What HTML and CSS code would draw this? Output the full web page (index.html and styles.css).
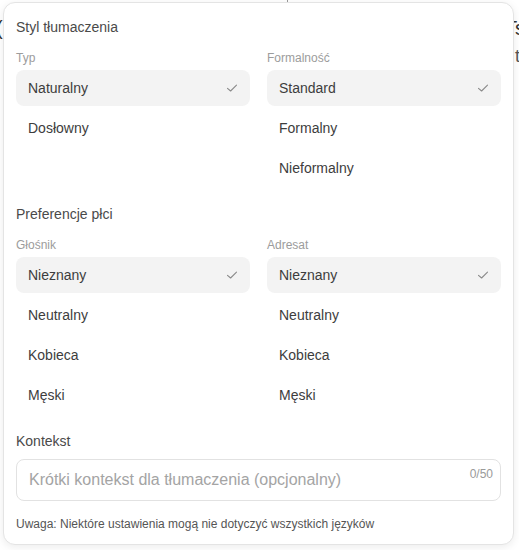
FILE: index.html
```html
<!DOCTYPE html>
<html lang="pl">
<head>
<meta charset="utf-8">
<title>Styl tłumaczenia</title>
<link rel="stylesheet" href="styles.css">
</head>
<body>
<div class="page">
  <div class="page-line one"><span>(</span><span>Ts</span></div>
  <div class="page-line two"><span></span><span>tf</span></div>
  <div class="divider"></div>
</div>

<div class="panel">
  <section class="section">
    <h2 class="heading">Styl tłumaczenia</h2>
    <div class="cols">
      <div class="col">
        <div class="label">Typ</div>
        <div class="opt selected"><span>Naturalny</span><svg class="check" viewBox="0 0 14 14"><path d="M2.5 7.3 L5.6 10 L11.5 4.2"/></svg></div>
        <div class="opt"><span>Dosłowny</span></div>
      </div>
      <div class="col">
        <div class="label">Formalność</div>
        <div class="opt selected"><span>Standard</span><svg class="check" viewBox="0 0 14 14"><path d="M2.5 7.3 L5.6 10 L11.5 4.2"/></svg></div>
        <div class="opt"><span>Formalny</span></div>
        <div class="opt"><span>Nieformalny</span></div>
      </div>
    </div>
  </section>

  <section class="section">
    <h2 class="heading">Preferencje płci</h2>
    <div class="cols">
      <div class="col">
        <div class="label">Głośnik</div>
        <div class="opt selected"><span>Nieznany</span><svg class="check" viewBox="0 0 14 14"><path d="M2.5 7.3 L5.6 10 L11.5 4.2"/></svg></div>
        <div class="opt"><span>Neutralny</span></div>
        <div class="opt"><span>Kobieca</span></div>
        <div class="opt"><span>Męski</span></div>
      </div>
      <div class="col">
        <div class="label">Adresat</div>
        <div class="opt selected"><span>Nieznany</span><svg class="check" viewBox="0 0 14 14"><path d="M2.5 7.3 L5.6 10 L11.5 4.2"/></svg></div>
        <div class="opt"><span>Neutralny</span></div>
        <div class="opt"><span>Kobieca</span></div>
        <div class="opt"><span>Męski</span></div>
      </div>
    </div>
  </section>

  <section class="section context">
    <h2 class="heading">Kontekst</h2>
    <div class="field">
      <input class="input" type="text" placeholder="Krótki kontekst dla tłumaczenia (opcjonalny)">
      <span class="counter">0/50</span>
    </div>
    <p class="note">Uwaga: Niektóre ustawienia mogą nie dotyczyć wszystkich języków</p>
  </section>
</div>
</body>
</html>
```

FILE: styles.css
```css
* { box-sizing: border-box; }

html, body {
  margin: 0;
  padding: 0;
  background: #ffffff;
  font-family: "Liberation Sans", Arial, sans-serif;
  overflow: hidden;
}

body {
  width: 519px;
  height: 550px;
  position: relative;
}

.page {
  padding-top: 16px;
  color: #333;
  font-size: 20px;
  line-height: 24px;
}

.page-line {
  display: flex;
  justify-content: space-between;
  margin: 0 -6px 0 -4px;
}

.page-line.two {
  font-size: 18px;
  margin-top: 4px;
  color: #555;
}

.divider {
  position: absolute;
  left: 287px;
  top: 0;
  width: 1px;
  height: 3px;
  background: #999;
}

.panel {
  position: absolute;
  left: 3px;
  top: 2px;
  width: 511px;
  background: #ffffff;
  border: 1px solid #e4e4e4;
  border-radius: 12px;
  box-shadow: 0 2px 8px rgba(0, 0, 0, 0.08);
  padding: 14px 12px 12px;
  display: flex;
  flex-direction: column;
  gap: 18px;
}

.heading {
  margin: 0 0 13px;
  font-size: 14px;
  line-height: 20px;
  font-weight: normal;
  color: #4a4a4a;
}

.cols {
  display: grid;
  grid-template-columns: 1fr 1fr;
  column-gap: 17px;
}

.col {
  display: flex;
  flex-direction: column;
  gap: 4px;
}

.label {
  font-size: 12px;
  line-height: 16px;
  color: #9c9c9c;
}

.opt {
  height: 36px;
  display: flex;
  align-items: center;
  justify-content: space-between;
  padding: 0 11px 0 12px;
  border-radius: 8px;
  font-size: 14px;
  color: #3d3d3d;
}

.opt.selected {
  background: #f3f3f3;
}

.check {
  width: 14px;
  height: 14px;
  fill: none;
  stroke: #8a8a8a;
  stroke-width: 1.1;
  stroke-linecap: round;
  stroke-linejoin: round;
}

.context .heading {
  margin-bottom: 8px;
}

.field {
  position: relative;
}

.input {
  display: block;
  width: 100%;
  height: 42px;
  border: 1px solid #e2e2e2;
  border-radius: 8px;
  padding: 0 60px 0 12px;
  font-family: "Liberation Sans", Arial, sans-serif;
  font-size: 16px;
  color: #333;
  background: #fff;
  outline: none;
}

.input::placeholder {
  color: #a4a4a4;
}

.counter {
  position: absolute;
  right: 8px;
  top: 7px;
  font-size: 12px;
  line-height: 16px;
  color: #9a9a9a;
}

.note {
  margin: 15px 0 0;
  font-size: 12px;
  line-height: 16px;
  color: #555;
}
```
